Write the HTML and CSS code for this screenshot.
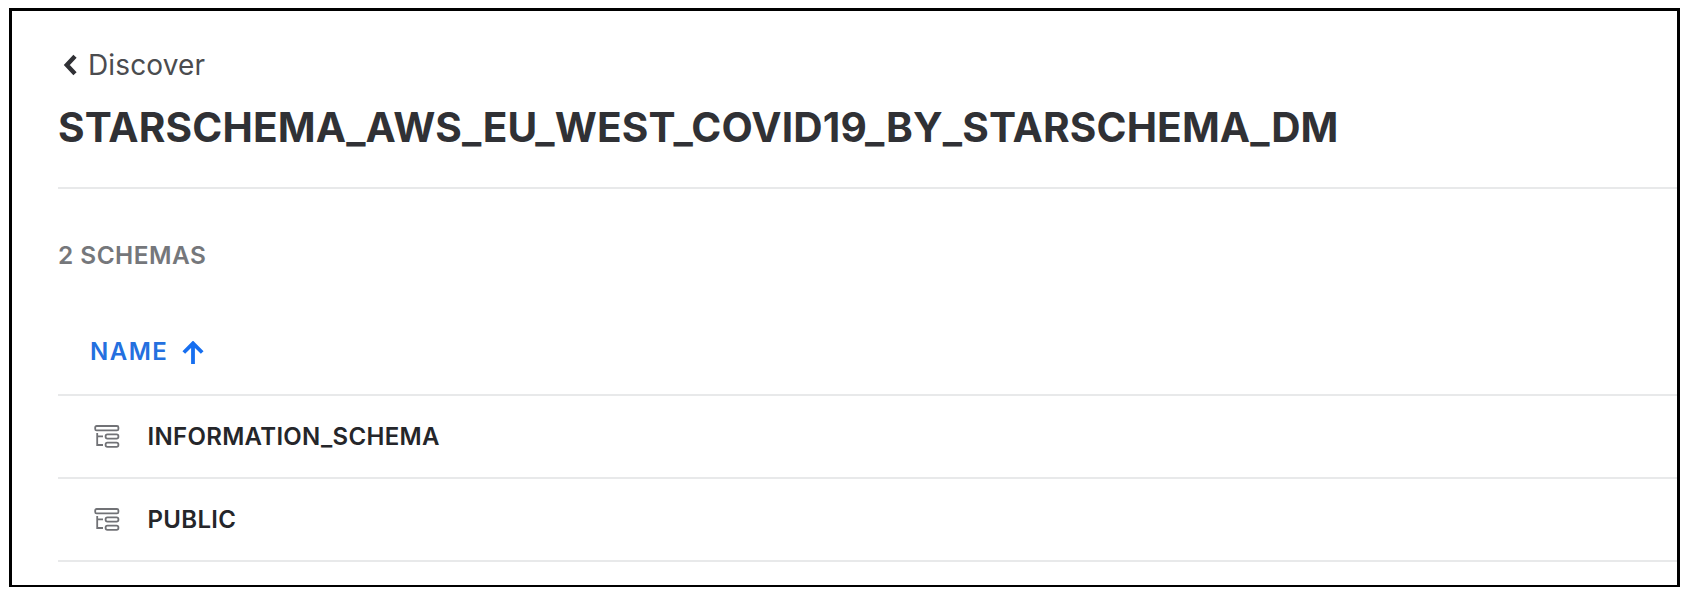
FILE: index.html
```html
<!DOCTYPE html>
<html lang="en">
<head>
<meta charset="utf-8">
<title>Discover</title>
<link rel="stylesheet" href="styles.css">
</head>
<body>
<main class="frame">
  <header class="header">
    <a class="back">
      <svg class="chevron" width="14" height="22" viewBox="0 0 14 22"><path d="M12 2.2 3.8 11l8.2 8.8"/></svg>
      <span class="back-label">Discover</span>
    </a>
    <h1 class="title">STARSCHEMA_AWS_EU_WEST_COVID19_BY_STARSCHEMA_DM</h1>
  </header>
  <p class="count">2 SCHEMAS</p>
  <section class="table">
    <div class="head">
      <span class="head-label">NAME</span>
      <svg class="arrow" width="22" height="24" viewBox="0 0 22 24"><path d="M11 23V2.5M1.8 11.5 11 2.3l9.2 9.2"/></svg>
    </div>
    <div class="row">
      <svg class="schema" width="26" height="26" viewBox="0 0 26 26"><rect x="1.2" y="2" width="23.2" height="4.4" rx="1.4"/><rect x="11.6" y="10.4" width="12.8" height="4.2" rx="1.8"/><rect x="11.6" y="18.6" width="12.8" height="4.2" rx="1.8"/><path d="M3.2 9v12H9M3.2 12.4H9"/></svg>
      <span class="name">INFORMATION_SCHEMA</span>
    </div>
    <div class="row">
      <svg class="schema" width="26" height="26" viewBox="0 0 26 26"><rect x="1.2" y="2" width="23.2" height="4.4" rx="1.4"/><rect x="11.6" y="10.4" width="12.8" height="4.2" rx="1.8"/><rect x="11.6" y="18.6" width="12.8" height="4.2" rx="1.8"/><path d="M3.2 9v12H9M3.2 12.4H9"/></svg>
      <span class="name">PUBLIC</span>
    </div>
  </section>
</main>
</body>
</html>
```
FILE: styles.css
```css
* { box-sizing: border-box; }
body { margin: 0; background: #fff; font-family: Inter, "Liberation Sans", sans-serif; }
svg { display: block; flex: none; fill: none; }
.frame { width: 1671px; height: 579px; margin: 8px 0 0 9px; padding-left: 46px; border: 3px solid #000; border-bottom-width: 2px; overflow: hidden; }
.header { height: 178px; padding-top: 34px; border-bottom: 2px solid #e8e9ea; }
.back { display: flex; align-items: center; height: 40px; padding-left: 5px; gap: 11px; color: #4b4c4f; font-size: 28px; line-height: 40px; letter-spacing: 0.15px; }
.chevron { stroke: #303135; stroke-width: 4.4; }
.title { margin: 18px 0 0; color: #303135; font-size: 40.6px; font-weight: 700; line-height: 50px; letter-spacing: 0.15px; white-space: nowrap; }
.count { margin: 51px 0 0; height: 30px; color: #75777b; font-size: 24.4px; font-weight: 600; line-height: 30px; letter-spacing: 0.48px; }
.table { padding-top: 48px; }
.head { display: flex; align-items: center; gap: 13.5px; height: 78px; padding: 0 0 8px 32px; color: #2470df; font-size: 24px; font-weight: 600; line-height: 30px; letter-spacing: 1.5px; border-bottom: 2px solid #e8e9ea; }
.arrow { margin-top: 1px; stroke: #176ff0; stroke-width: 3.8; }
.row { display: flex; align-items: center; gap: 27.5px; height: 83px; padding-left: 36px; border-bottom: 2px solid #e8e9ea; }
.schema { stroke: #717276; stroke-width: 1.8; }
.name { color: #25262a; font-size: 24px; font-weight: 600; letter-spacing: 0.31px; }
```
